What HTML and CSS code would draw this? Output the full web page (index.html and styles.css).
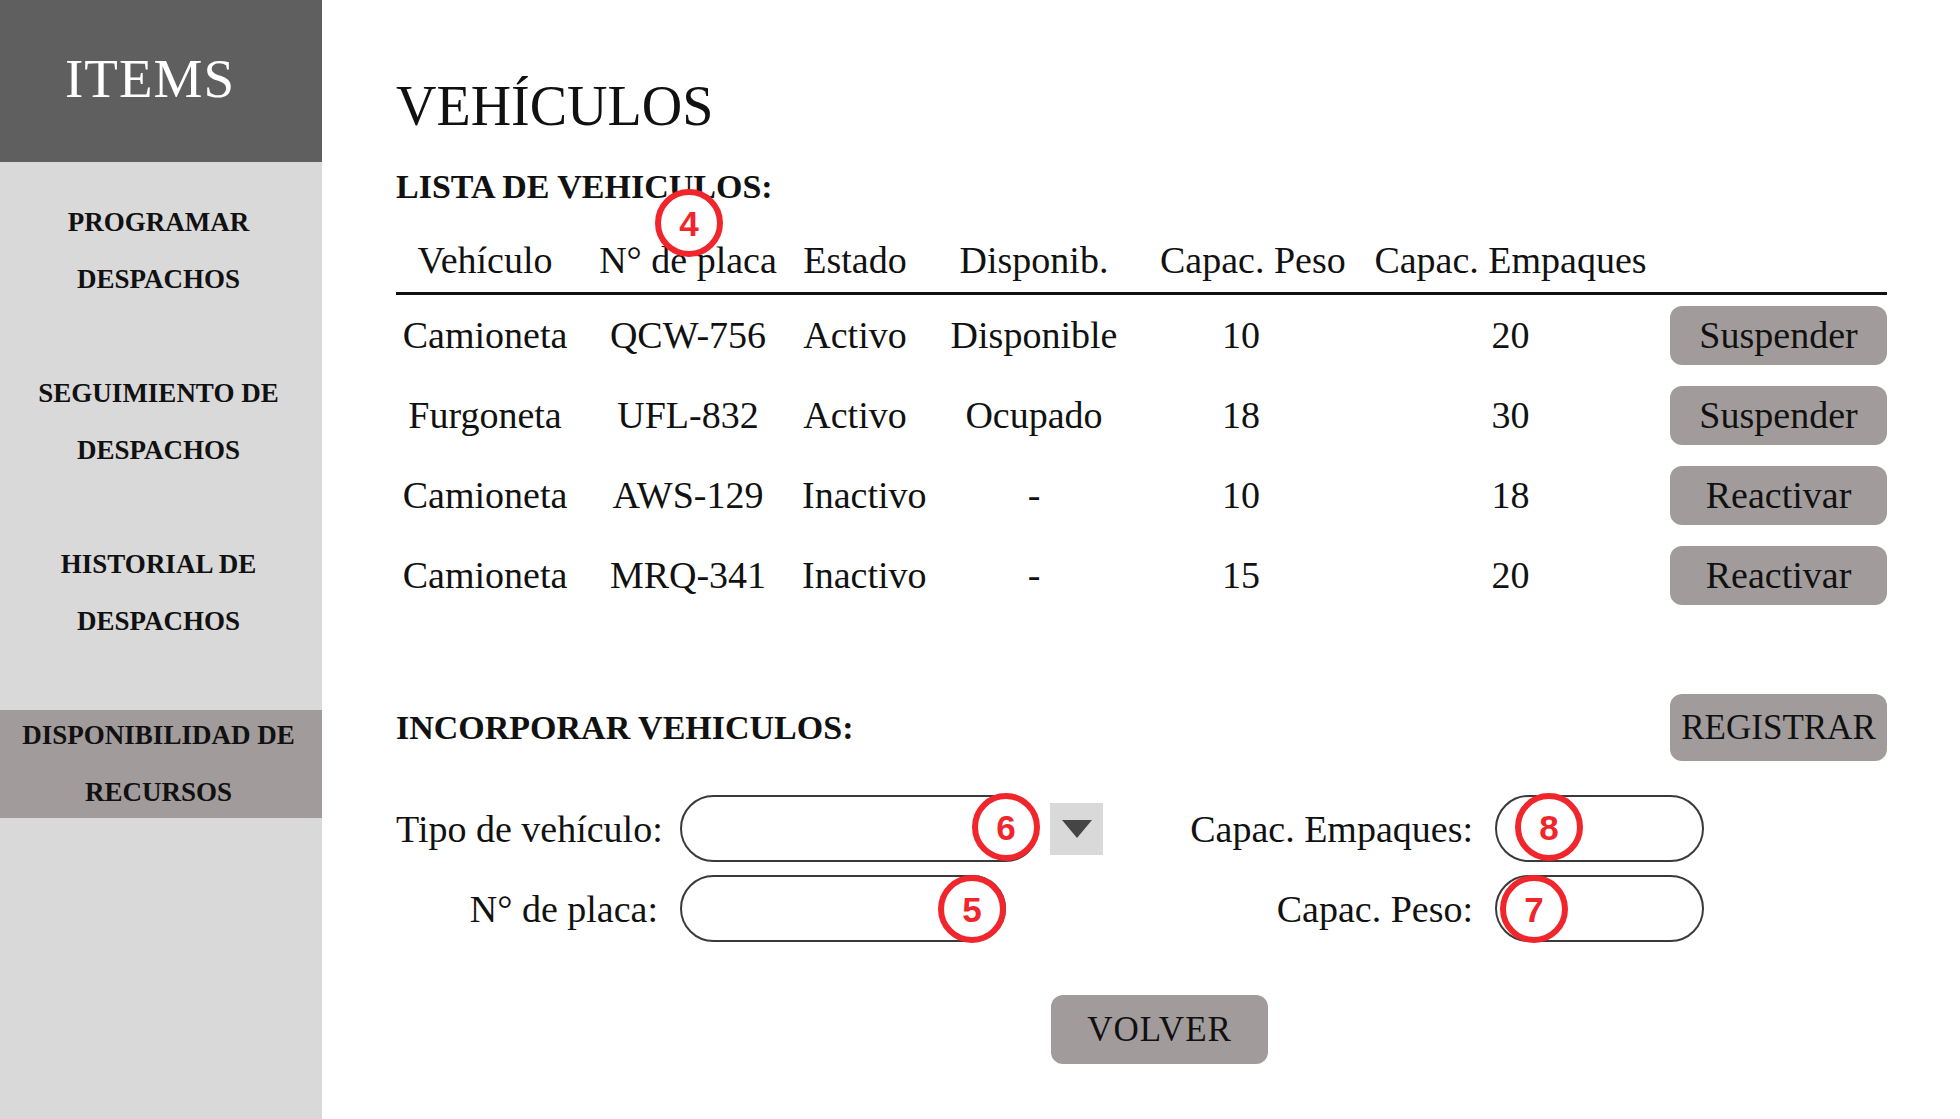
FILE: index.html
```html
<!DOCTYPE html>
<html lang="es">
<head>
<meta charset="utf-8">
<title>Vehículos</title>
<link rel="stylesheet" href="styles.css">
</head>
<body>
<aside class="sidebar">
  <div class="brand">ITEMS</div>
  <nav class="nav">
    <a class="nav-item"><span>PROGRAMAR<br>DESPACHOS</span></a>
    <a class="nav-item"><span>SEGUIMIENTO DE<br>DESPACHOS</span></a>
    <a class="nav-item"><span>HISTORIAL DE<br>DESPACHOS</span></a>
    <a class="nav-item active"><span>DISPONIBILIDAD DE<br>RECURSOS</span></a>
  </nav>
</aside>
<main class="main">
  <h1 class="title">VEHÍCULOS</h1>
  <h2 class="section">LISTA DE VEHICULOS:</h2>
  <div class="table">
    <div class="row head">
      <div class="cell">Vehículo</div>
      <div class="cell anchor">N° de placa<span class="mark mark-4">4</span></div>
      <div class="cell">Estado</div>
      <div class="cell">Disponib.</div>
      <div class="cell">Capac. Peso</div>
      <div class="cell">Capac. Empaques</div>
      <div class="cell"></div>
    </div>
    <div class="row">
      <div class="cell">Camioneta</div><div class="cell">QCW-756</div><div class="cell">Activo</div><div class="cell">Disponible</div><div class="cell">10</div><div class="cell">20</div>
      <button class="btn row-btn">Suspender</button>
    </div>
    <div class="row">
      <div class="cell">Furgoneta</div><div class="cell">UFL-832</div><div class="cell">Activo</div><div class="cell">Ocupado</div><div class="cell">18</div><div class="cell">30</div>
      <button class="btn row-btn">Suspender</button>
    </div>
    <div class="row">
      <div class="cell">Camioneta</div><div class="cell">AWS-129</div><div class="cell">Inactivo</div><div class="cell">-</div><div class="cell">10</div><div class="cell">18</div>
      <button class="btn row-btn">Reactivar</button>
    </div>
    <div class="row">
      <div class="cell">Camioneta</div><div class="cell">MRQ-341</div><div class="cell">Inactivo</div><div class="cell">-</div><div class="cell">15</div><div class="cell">20</div>
      <button class="btn row-btn">Reactivar</button>
    </div>
  </div>

  <div class="incorp">
    <h2 class="section">INCORPORAR VEHICULOS:</h2>
    <button class="btn big-btn">REGISTRAR</button>
  </div>

  <div class="form">
    <label class="lbl">Tipo de vehículo:</label>
    <div class="field">
      <div class="input input-tipo"><span class="mark mark-6">6</span></div>
      <div class="dropdown"><svg width="30" height="18" viewBox="0 0 30 18"><path d="M0 0 H30 L15 18 Z" fill="#454545"/></svg></div>
    </div>
    <label class="lbl">Capac. Empaques:</label>
    <div class="field">
      <div class="input input-small"><span class="mark mark-8">8</span></div>
    </div>

    <label class="lbl">N° de placa:</label>
    <div class="field">
      <div class="input input-placa"><span class="mark mark-5">5</span></div>
    </div>
    <label class="lbl">Capac. Peso:</label>
    <div class="field">
      <div class="input input-small"><span class="mark mark-7">7</span></div>
    </div>
  </div>

  <div class="footer">
    <button class="btn big-btn volver">VOLVER</button>
  </div>
</main>
</body>
</html>
```

FILE: styles.css
```css
* { box-sizing: border-box; }

html, body {
  margin: 0;
  padding: 0;
}

body {
  display: flex;
  height: 100vh;
  font-family: "Liberation Serif", "Times New Roman", serif;
  color: #111;
  background: #fff;
  overflow: hidden;
}

.sidebar {
  width: 322px;
  flex: 0 0 322px;
  background: #d9d9d9;
  display: flex;
  flex-direction: column;
}

.brand {
  height: 162px;
  background: #5f5f5f;
  color: #fff;
  font-size: 55px;
  display: flex;
  align-items: center;
  justify-content: center;
  padding: 0 22px 5px 0;
  letter-spacing: 1px;
}

.nav {
  display: flex;
  flex-direction: column;
  gap: 63px;
  padding-top: 35px;
}

.nav-item {
  display: flex;
  align-items: center;
  justify-content: center;
  height: 108px;
  padding-right: 5px;
  font-size: 27px;
  font-weight: bold;
  line-height: 57px;
  text-align: center;
  color: #111;
}

.nav-item.active {
  background: #a19b9b;
}

.main {
  flex: 1;
  padding: 78px 73px 0 74px;
  display: flex;
  flex-direction: column;
}

.title {
  margin: 0;
  font-size: 56px;
  font-weight: normal;
  line-height: 56px;
}

.section {
  margin: 36px 0 0;
  font-size: 34px;
  font-weight: bold;
  line-height: 34px;
}

.table {
  display: flex;
  flex-direction: column;
}

.row {
  display: grid;
  grid-template-columns: 178px 228px 106px 252px 162px 1fr 217px;
  align-items: center;
  height: 80px;
  font-size: 38px;
  line-height: 38px;
}

.row.head {
  height: 91px;
  align-items: end;
  padding-bottom: 13px;
  border-bottom: 3px solid #111;
}

.cell {
  text-align: center;
  white-space: nowrap;
}

.cell:nth-child(6) { padding-left: 29px; }

.anchor { position: relative; }

.btn {
  font-family: "Liberation Serif", "Times New Roman", serif;
  background: #a19b9b;
  color: #111;
  border: none;
  border-radius: 12px;
  display: flex;
  align-items: center;
  justify-content: center;
  padding: 0;
}

.row-btn {
  width: 217px;
  height: 59px;
  font-size: 38px;
}

.incorp {
  margin-top: 79px;
  display: flex;
  align-items: center;
  justify-content: space-between;
  height: 67px;
}

.incorp .section { margin: 0; }

.big-btn {
  width: 217px;
  height: 67px;
  font-size: 35px;
}

.form {
  margin-top: 34px;
  display: grid;
  grid-template-columns: 284px 423px 392px 209px;
  grid-auto-rows: 67px;
  row-gap: 13px;
  align-items: center;
}

.lbl {
  font-size: 38px;
  text-align: right;
  padding-right: 22px;
  white-space: nowrap;
}

.field {
  display: flex;
  align-items: center;
  height: 67px;
}

.input {
  position: relative;
  height: 67px;
  border: 2px solid #3a3a3a;
  border-radius: 34px;
  background: #fff;
}

.input-tipo { width: 359px; }
.input-placa { width: 326px; }
.input-small { width: 209px; }

.dropdown {
  margin-left: 11px;
  width: 53px;
  height: 52px;
  background: #d9d9d9;
  display: flex;
  align-items: center;
  justify-content: center;
}

.footer {
  margin-top: 53px;
  display: flex;
  justify-content: center;
  padding-left: 36px;
}

.volver {
  height: 69px;
  letter-spacing: 1px;
}

.mark {
  position: absolute;
  width: 68px;
  height: 68px;
  border: 6px solid #f0262c;
  border-radius: 50%;
  background: #fff;
  color: #f0262c;
  font-family: "Liberation Sans", Arial, sans-serif;
  font-weight: bold;
  font-size: 35px;
  line-height: 1;
  display: flex;
  align-items: center;
  justify-content: center;
}

.mark-4 { left: 81px; top: -52px; }
.mark-6 { right: -3px; top: -4px; }
.mark-5 { right: -2px; top: -2px; }
.mark-8 { left: 18px; top: -4px; }
.mark-7 { left: 3px; top: -2px; }
```
